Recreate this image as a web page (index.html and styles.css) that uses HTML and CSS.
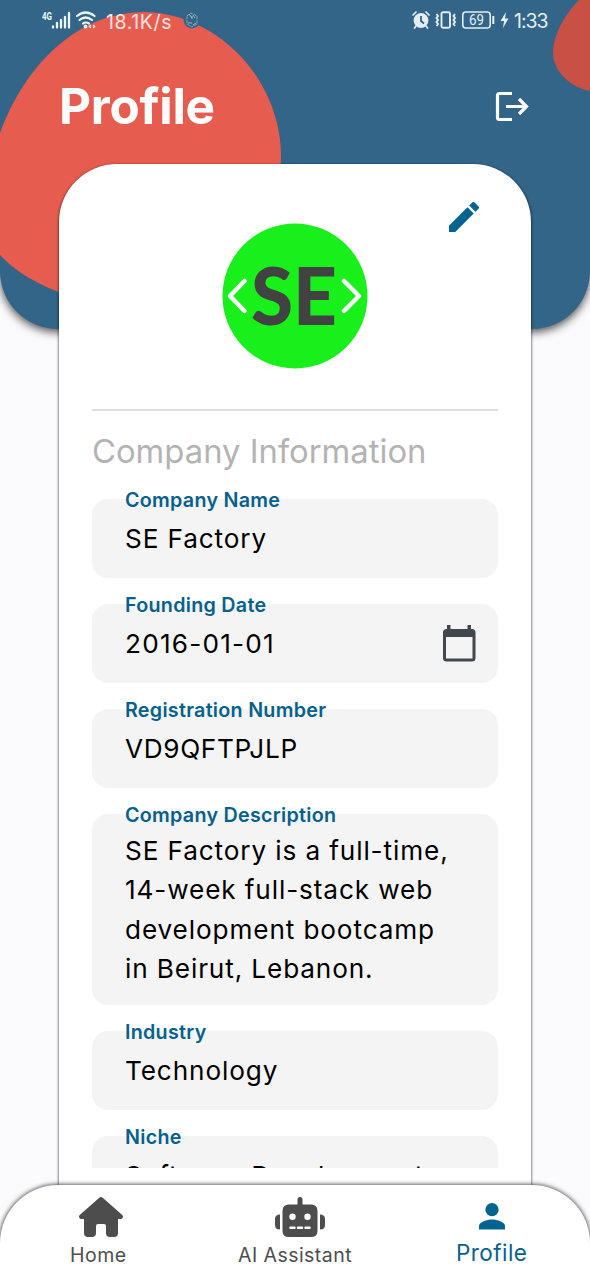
FILE: index.html
```html
<!DOCTYPE html>
<html lang="en">
<head>
<meta charset="utf-8">
<title>Profile</title>
<link rel="stylesheet" href="styles.css">
</head>
<body>
<div class="screen">
  <header class="header">
    <svg class="blobs" viewBox="0 0 590 329" aria-hidden="true">
      <path fill="#e65d50" d="M0 133C20 77 69 12 145 12C219 14 281 80 281 157C281 235 200 300 100 300C70 300 25 282 0 255Z"/>
      <path fill="#c85045" d="M579 0C566 13 553 34 553 53C553 72 572 88 590 91V0Z"/>
    </svg>
    <div class="status">
      <div class="status-left">
        <svg width="30" height="20" viewBox="0 0 30 20">
          <text class="network" x="0" y="9.500" textLength="10" lengthAdjust="spacingAndGlyphs">4G</text>
          <path d="M11 16.500V17.500M15 13V17.500M19 10V17.500M23 7V17.500M27 3V17.500" stroke="#edf5f8" stroke-width="2.300" stroke-linecap="round"/>
        </svg>
        <svg class="wifi" width="22" height="20" viewBox="0 0 22 20" fill="none" stroke="#edf5f8" stroke-width="2.200" stroke-linecap="round">
          <path d="M1 6Q9.500-1 18.500 6M3.500 10Q9.500 5 16 10M7 13.500Q9.500 11.500 13 13.500"/>
          <circle cx="9.500" cy="16.500" r=".8"/>
          <path d="M14.500 15.500L13.500 16.500L14.500 17.500M17.500 15.500L18.500 16.500L17.500 17.500" stroke-width="1.300"/>
        </svg>
        <span class="speed">18.1K/s</span>
        <svg class="badge" width="18" height="18" viewBox="0 0 18 18">
          <circle cx="9" cy="9" r="8.500" fill="#326587"/>
          <path d="M4 5L8 2L14 5V13L9 16L4 13Z" fill="none" stroke="#9db9c7" stroke-width=".8" stroke-dasharray="3 1"/>
          <path d="M6 3L9 7M10 4L12 7M5 12H9M10 14L13 12M9 5V8" stroke="#b5cad4" stroke-width=".8"/>
        </svg>
      </div>
      <div class="status-right">
        <svg width="18" height="18" viewBox="0 0 18 18">
          <circle cx="9" cy="9.500" r="7.400" fill="#e4eef4"/>
          <path d="M1 4L4 1M14 1L17 4M4 15L2.500 17M14 15L15.500 17" stroke="#e4eef4" stroke-width="1.700" stroke-linecap="round"/>
          <path d="M9 5V10L12 12.500" fill="none" stroke="#326587" stroke-width="1.800"/>
        </svg>
        <svg width="22" height="18" viewBox="0 0 22 18" fill="none" stroke="#e4eef4" stroke-width="1.900">
          <rect x="6.500" y="1.200" width="8.500" height="15.600" rx="1.500"/>
          <path d="M1.500 3L3 5L1.500 7L3 9L1.500 11L3 13L1.500 15M20 3L18.500 5L20 7L18.500 9L20 11L18.500 13L20 15"/>
        </svg>
        <svg width="33" height="18" viewBox="0 0 33 18">
          <rect x=".8" y="1" width="27.400" height="16" rx="3" fill="none" stroke="#e4eef4" stroke-width="1.600"/>
          <path d="M31.300 5V13" stroke="#e4eef4" stroke-width="2"/>
          <text class="battery" x="7" y="14.200" textLength="15" lengthAdjust="spacingAndGlyphs">69</text>
        </svg>
        <svg width="9" height="18" viewBox="0 0 9 18"><path d="M6 1L.5 10H4L3 17L8.500 7.500H5Z" fill="#e4eef4"/></svg>
        <span class="clock">1:33</span>
      </div>
    </div>
    <div class="titlebar">
      <h1 class="title">Profile</h1>
      <svg class="logout" width="34" height="32" viewBox="0 0 34 32" fill="none" stroke="#fff" stroke-width="3.200">
        <path d="M17 2.500H4.500Q2.500 2.500 2.500 4.500V26.500Q2.500 28.500 4.500 28.500H17M11 15.500H31M24 8L31.500 15.500L24 23"/>
      </svg>
    </div>
  </header>

  <main class="card">
    <svg class="edit" width="30" height="30" viewBox="3 3 18 18"><path fill="#016490" d="M3 17.250V21h3.750L17.810 9.940l-3.750-3.750L3 17.250zM20.710 7.040a1 1 0 0 0 0-1.410l-2.340-2.340a1 1 0 0 0-1.410 0l-1.830 1.830 3.750 3.750 1.830-1.830z"/></svg>
    <svg class="logo" width="146" height="146" viewBox="0 0 146 146">
      <circle cx="73" cy="73" r="72.500" fill="#19ef1a"/>
      <path d="M22.500 58L8 73L22.500 88M122 58L137 73L122 88" fill="none" stroke="#fff" stroke-width="4.500" stroke-linecap="round" stroke-linejoin="round"/>
      <text class="logo-text" x="29" y="101.500" textLength="86" lengthAdjust="spacingAndGlyphs">SE</text>
    </svg>
    <h2 class="section">Company Information</h2>
    <div class="fields">
      <div class="field"><span class="label">Company Name</span><span class="value">SE Factory</span></div>
      <div class="field"><span class="label">Founding Date</span><span class="value date">2016-01-01</span>
        <svg class="calendar" width="34" height="37" viewBox="0 0 34 37"><path fill="#42474e" fill-rule="evenodd" d="M5 0h3.500v4h17V0H29v4h1q3.500 0 3.500 3.500V33q0 3.500-3.500 3.500H4.500Q1 36.500 1 33V7.500Q1 4 4.500 4H5zM4 12v21.500h26.500V12z"/></svg>
      </div>
      <div class="field"><span class="label">Registration Number</span><span class="value code">VD9QFTPJLP</span></div>
      <div class="field tall"><span class="label">Company Description</span><span class="value">SE Factory is a full-time,<br>14-week full-stack web<br>development bootcamp<br>in Beirut, Lebanon.</span></div>
      <div class="field"><span class="label">Industry</span><span class="value">Technology</span></div>
      <div class="field"><span class="label">Niche</span><span class="value">Software Development</span></div>
    </div>
  </main>

  <nav class="nav">
    <a class="tab">
      <svg class="tab-icon home" width="44" height="40" viewBox="0 0 44 40"><path fill="#4d4d4d" d="M20.300.8Q22-.7 23.700.8L43.300 18Q44.400 19.200 43.800 20.500Q43.300 22 41.500 22H39V36Q39 40 35 40H31Q27 40 27 36V29Q27 27 25 27H19Q17 27 17 29V36Q17 40 13 40H9Q5 40 5 36V22H2.500Q.7 22 .2 20.500Q-.4 19.200.7 18Z"/></svg>
      <span class="tab-label">Home</span>
    </a>
    <a class="tab">
      <svg class="tab-icon robot" width="50" height="40" viewBox="0 0 50 40"><path fill="#4d4d4d" fill-rule="evenodd" d="M22.500 7.500V2.500a2.500 2.500 0 0 1 5 0V7.500H36Q42.500 7.500 42.500 14V34Q42.500 40 36 40H14Q7.500 40 7.500 34V14Q7.500 7.500 14 7.500ZM17.500 16.500a3.200 3.200 0 1 0 0 6.400a3.200 3.200 0 1 0 0-6.400ZM32.500 16.500a3.200 3.200 0 1 0 0 6.400a3.200 3.200 0 1 0 0-6.400ZM15.500 29.500a1.200 1.200 0 0 0 0 2.500h4a1.200 1.200 0 0 0 0-2.500ZM23 29.500a1.200 1.200 0 0 0 0 2.500h4a1.200 1.200 0 0 0 0-2.500ZM30.500 29.500a1.200 1.200 0 0 0 0 2.500h4a1.200 1.200 0 0 0 0-2.500ZM5 17.500V32.500Q0 32.500 0 28V22Q0 17.500 5 17.500ZM45 17.500Q50 17.500 50 22V28Q50 32.500 45 32.500Z"/></svg>
      <span class="tab-label">AI Assistant</span>
    </a>
    <a class="tab active">
      <svg class="tab-icon person" width="26" height="27" viewBox="0 0 26 27" fill="#016490"><circle cx="13" cy="6.700" r="6.600"/><path d="M0 26.500V23C0 19 8 16.500 13 16.500S26 19 26 23V26.500Z"/></svg>
      <span class="tab-label">Profile</span>
    </a>
  </nav>
</div>
</body>
</html>
```
FILE: styles.css
```css
* { box-sizing: border-box; }
body {
  margin: 0;
  background: #fbfbfe;
  font-family: Inter, "Noto Sans", sans-serif;
}
svg { display: block; flex: none; }
.screen {
  width: 590px;
  height: 1280px;
  display: flex;
  flex-direction: column;
  overflow: hidden;
}
.header {
  position: relative;
  flex: none;
  height: 329px;
  overflow: hidden;
  background: #326587;
  border-radius: 0 0 58px 58px;
  box-shadow: 0 3px 10px rgba(0, 0, 0, .7);
}
.blobs { position: absolute; inset: 0; }
.status {
  position: relative;
  display: flex;
  justify-content: space-between;
  padding: 10px 42px 0;
  height: 42px;
}
.status-left, .status-right { display: flex; align-items: center; height: 20px; }
.wifi { margin-left: 4px; }
.speed {
  margin-left: 8px;
  width: 68px;
  font-size: 19.500px;
  line-height: 20px;
  padding-top: 3px;
  letter-spacing: .6px;
  color: #fbe4e1;
  white-space: nowrap;
}
.badge { margin-left: 9px; }
.network { font: 700 11px Roboto, sans-serif; fill: #edf5f8; }
.battery { font: 400 14.500px Roboto, sans-serif; fill: #e4eef4; }
.status-right svg { margin-right: 5px; }
.clock {
  width: 34px;
  padding-top: 2px;
  font-size: 19.500px;
  line-height: 20px;
  letter-spacing: -1px;
  color: #e4eef4;
  white-space: nowrap;
}
.titlebar {
  position: relative;
  display: flex;
  justify-content: space-between;
  padding: 34px 61px 0 59px;
}
.title {
  margin: 0;
  font-size: 49.500px;
  line-height: 60px;
  font-weight: 700;
  letter-spacing: -.3px;
  color: #fff;
}
.logout { margin-top: 15px; }
.card {
  position: relative;
  flex: 1;
  min-height: 0;
  display: flex;
  flex-direction: column;
  margin: -165px 59px 0;
  padding: 38px 33px 17px;
  background: #fff;
  border-radius: 58px 58px 0 0;
  box-shadow: 0 1px 3px rgba(0, 0, 0, .9);
}
.edit { align-self: flex-end; margin-right: 19px; }
.logo { align-self: center; margin-top: -9px; }
.logo-text { font: 900 80px Lato, sans-serif; fill: #424242; }
.section {
  flex: none;
  margin: 40px 0 0;
  padding-top: 19px;
  height: 90px;
  border-top: 2px solid #dedede;
  font-size: 32.800px;
  line-height: 42px;
  font-weight: 400;
  color: #b3b3b3;
  white-space: nowrap;
}
.fields {
  flex: 1;
  min-height: 0;
  margin-top: -14px;
  padding-top: 14px;
  display: flex;
  flex-direction: column;
  gap: 26px;
  overflow: hidden;
}
.field {
  flex: none;
  position: relative;
  height: 79px;
  padding: 20px 33px 0;
  border-radius: 16px;
  background: #f4f4f4;
}
.field.tall { height: 191px; padding-top: 17px; }
.label {
  position: absolute;
  left: 33px;
  top: -12px;
  font-size: 19.700px;
  line-height: 26px;
  font-weight: 600;
  letter-spacing: .28px;
  color: #05618c;
  white-space: nowrap;
}
.value {
  display: block;
  font-size: 26.200px;
  line-height: 39.400px;
  letter-spacing: .87px;
  color: #000;
  white-space: nowrap;
}
.date { letter-spacing: 1.2px; }
.code { letter-spacing: .65px; }
.calendar { position: absolute; right: 22px; top: 21px; }
.nav {
  position: relative;
  flex: none;
  display: grid;
  grid-template-columns: repeat(3, 1fr);
  height: 95px;
  background: #fff;
  border-radius: 58px 58px 0 0;
  box-shadow: 0 0 5px rgba(0, 0, 0, .9);
}
.tab {
  display: flex;
  flex-direction: column;
  align-items: center;
  padding-top: 12px;
  color: #4d4d4d;
}
.home { margin-left: 6px; }
.robot { margin-left: 10px; }
.tab-label {
  margin-top: 6px;
  font-size: 19.500px;
  line-height: 24px;
  letter-spacing: .45px;
}
.person { margin-top: 6px; }
.active { color: #05618c; }
.active .tab-label { margin-top: 9px; font-size: 22.500px; line-height: 28px; }
```
